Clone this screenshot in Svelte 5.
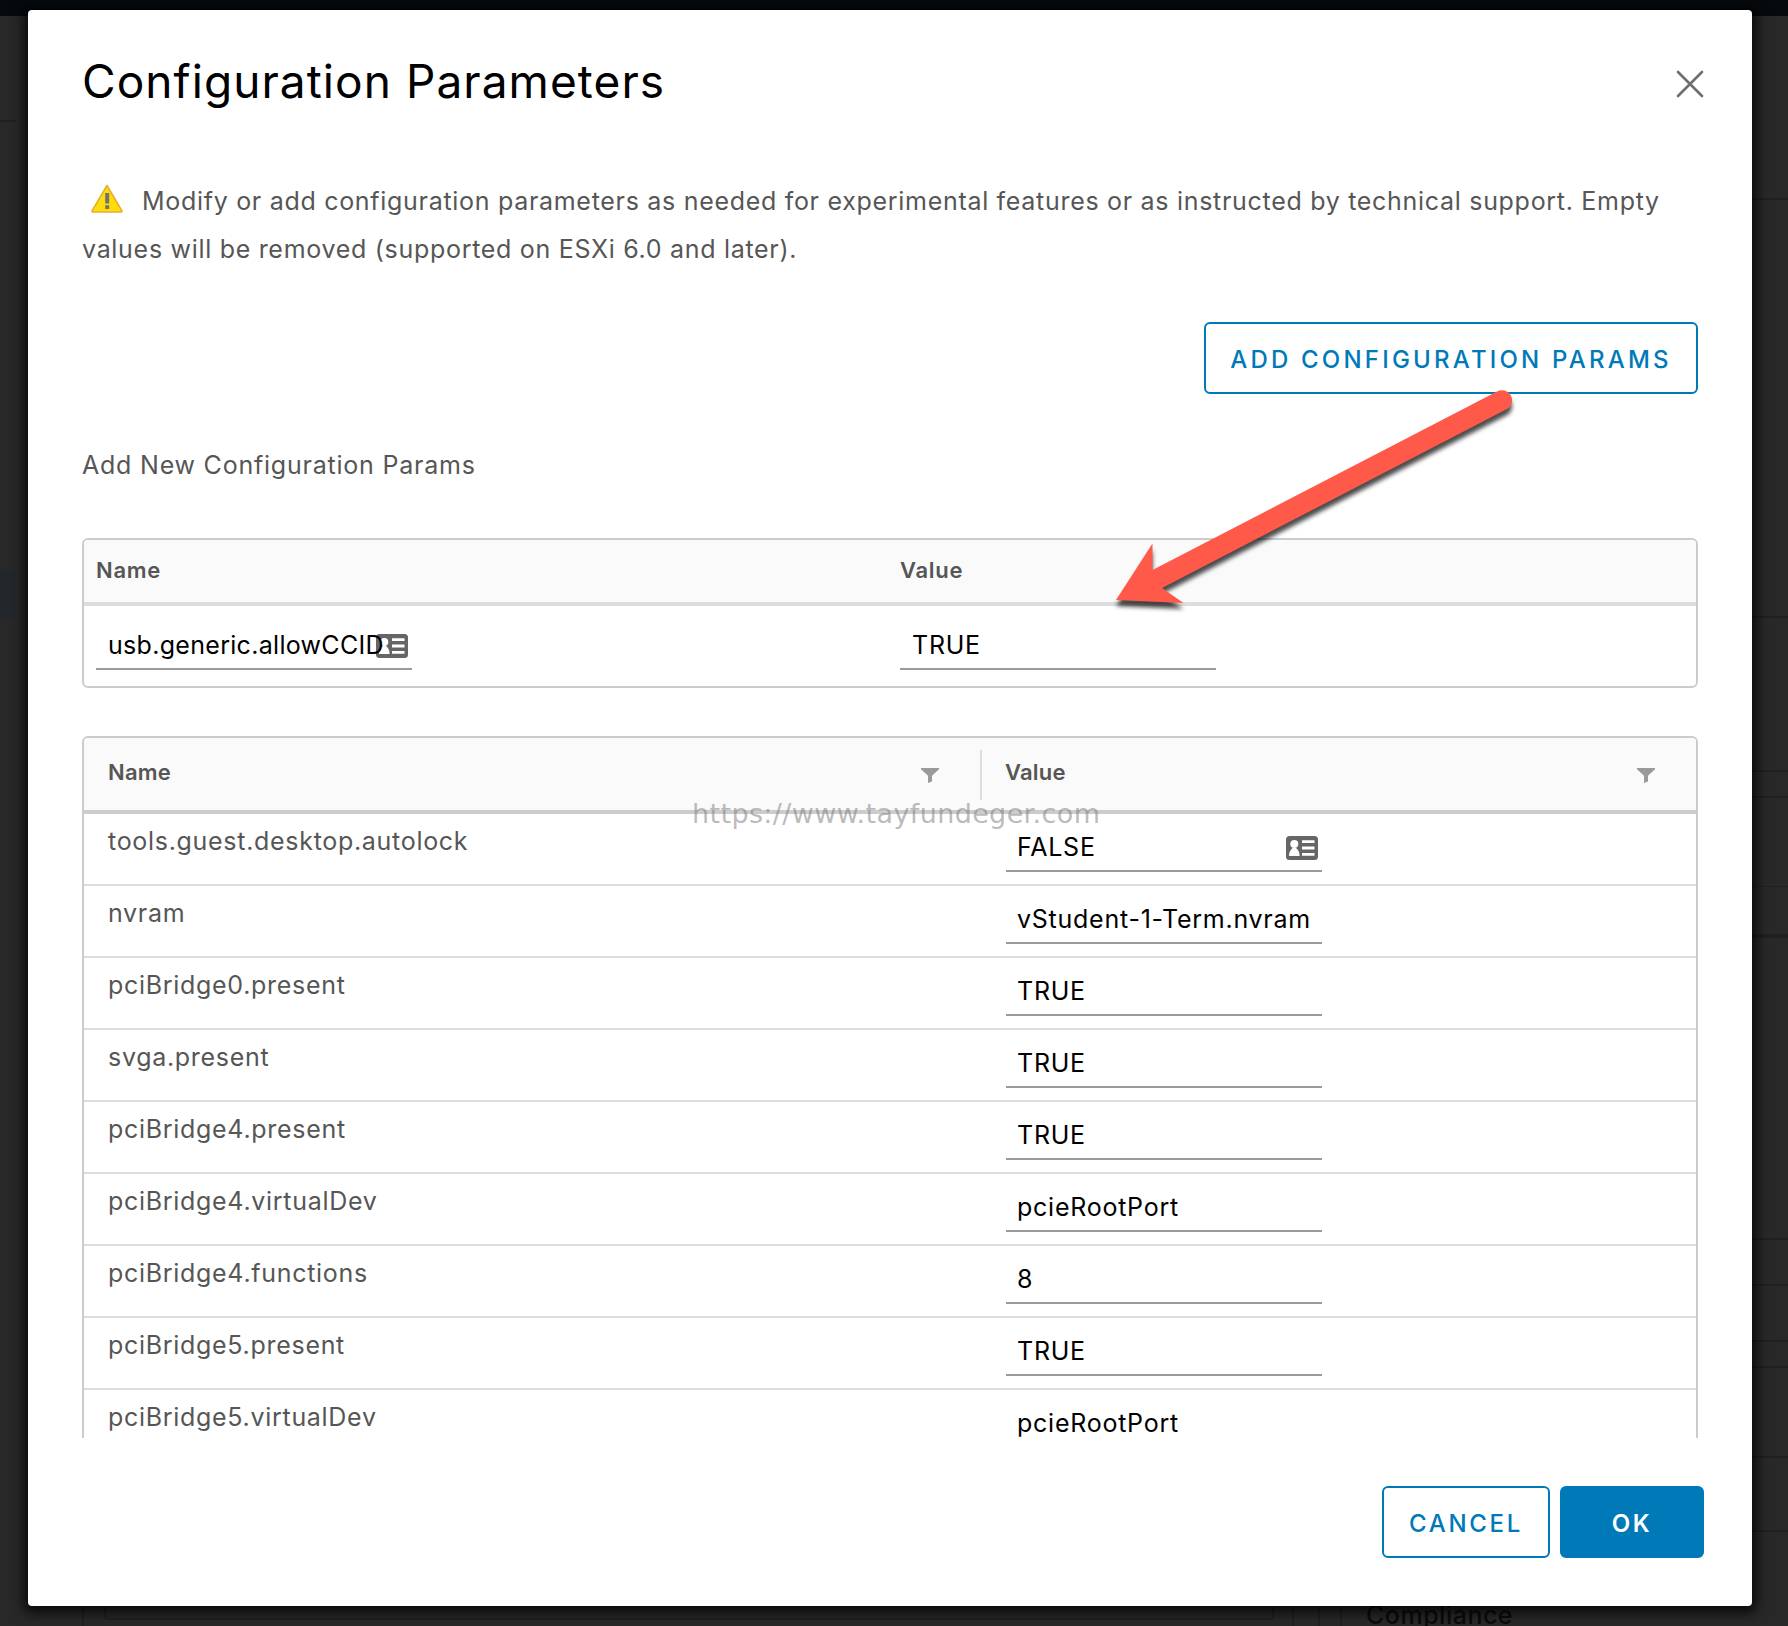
<script>
	let newParam = { name: 'usb.generic.allowCCID', value: 'TRUE' };

	let params = [
		{ name: 'tools.guest.desktop.autolock', value: 'FALSE', card: true },
		{ name: 'nvram', value: 'vStudent-1-Term.nvram' },
		{ name: 'pciBridge0.present', value: 'TRUE' },
		{ name: 'svga.present', value: 'TRUE' },
		{ name: 'pciBridge4.present', value: 'TRUE' },
		{ name: 'pciBridge4.virtualDev', value: 'pcieRootPort' },
		{ name: 'pciBridge4.functions', value: '8' },
		{ name: 'pciBridge5.present', value: 'TRUE' },
		{ name: 'pciBridge5.virtualDev', value: 'pcieRootPort' }
	];

	// faint edges of the page behind the modal
	const leftLines = [{ top: 120, height: 2 }];
	const rightLines = [
		{ top: 198, height: 2 },
		{ top: 616, height: 2 },
		{ top: 770, height: 2 },
		{ top: 796, height: 2 },
		{ top: 886, height: 1 },
		{ top: 934, height: 4 },
		{ top: 1238, height: 2 },
		{ top: 1284, height: 2 },
		{ top: 1340, height: 2 },
		{ top: 1366, height: 2 },
		{ top: 1456, height: 2 },
		{ top: 1530, height: 2 }
	];
</script>

{#snippet cardIcon()}
	<svg class="card-icon" viewBox="0 0 32 24" width="32" height="24">
		<rect width="32" height="24" rx="3.5" fill="#666" />
		<circle cx="8.3" cy="8" r="4" fill="#fff" />
		<path d="M3 20c0-4 1.500-6 3.500-8h3.600c2 2 3.500 4 3.500 8z" fill="#fff" />
		<path d="M16 4.200h12.500v2.800H16zM16 10.600h12.500v2.800H16zM16 17h12.500v2.800H16z" fill="#fff" />
	</svg>
{/snippet}

{#snippet filterIcon()}
	<svg class="filter-icon" viewBox="0 0 18 15" width="18" height="15">
		<path d="M0 0h18v1.200L11 7.800v5.700L7 15V7.800L0 1.200z" fill="#9a9a9a" />
	</svg>
{/snippet}

<div class="page">
	<div class="topbar"></div>
	{#each leftLines as line}
		<div class="line left" style="top: {line.top}px; height: {line.height}px"></div>
	{/each}
	<div class="selected"></div>
	{#each rightLines as line}
		<div class="line right" style="top: {line.top}px; height: {line.height}px"></div>
	{/each}
	<div class="portlet"></div>
	<div class="divider first"></div>
	<div class="divider second"></div>
	<div class="divider third"></div>
	<div class="divider fourth"></div>
	<span class="behind">Compliance</span>

	<div class="modal">
		<header class="modal-header">
			<h1>Configuration Parameters</h1>
			<button class="close" aria-label="Close">
				<svg viewBox="0 0 28 28" width="28" height="28">
					<path
						d="M2 2l24 24M26 2L2 26"
						stroke="#6e6e6e"
						stroke-width="2.600"
						stroke-linecap="round"
						fill="none"
					/>
				</svg>
			</button>
		</header>

		<div class="modal-body">
			<p class="message">
				<svg class="warning" viewBox="0 0 32 29" width="32" height="29">
					<path
						d="M16 1.500L31 27q.3 1-.8 1H1.800Q.7 28 1 27z"
						fill="#ffdc0b"
						stroke="#e6b02e"
						stroke-width="1.500"
						stroke-linejoin="round"
					/>
					<path d="M14.200 9h4v10.500h-4zM14.200 21.200h4v3.800h-4z" fill="#737373" />
				</svg>Modify or add configuration parameters as needed for experimental features or as instructed by
				technical support. Empty<br />values will be removed (supported on ESXi 6.0 and later).
			</p>

			<div class="actions">
				<button class="btn btn-add">Add Configuration Params</button>
			</div>

			<h2>Add New Configuration Params</h2>

			<div class="table new-params">
				<div class="head">
					<span>Name</span>
					<span>Value</span>
				</div>
				<div class="row">
					<div class="cell">
						<div class="input">
							<input type="text" class="new-name" bind:value={newParam.name} />{@render cardIcon()}
						</div>
					</div>
					<div class="cell">
						<div class="input"><input type="text" bind:value={newParam.value} /></div>
					</div>
				</div>
			</div>

			<div class="table grid">
				<div class="head">
					<div class="column">Name {@render filterIcon()}</div>
					<div class="column">Value {@render filterIcon()}</div>
				</div>
				{#each params as param}
					<div class="row">
						<div class="name">{param.name}</div>
						<div class="input">
							<input type="text" bind:value={param.value} />
							{#if param.card}{@render cardIcon()}{/if}
						</div>
					</div>
				{/each}
			</div>
		</div>

		<footer class="modal-footer">
			<button class="btn btn-cancel">Cancel</button>
			<button class="btn btn-primary">OK</button>
		</footer>
	</div>

	<svg class="arrow" viewBox="0 0 420 240" width="420" height="240">
		<path
			d="M16 210L52.500 153.500V180L397 1.500A10 10 0 0 1 407 19L62 198L83.500 213z"
			fill="#ff594a"
		/>
	</svg>
	<span class="watermark">https://www.tayfundeger.com</span>
</div>

<style>
	:global(body) {
		margin: 0;
		background: #282828;
	}

	.page {
		position: relative;
		box-sizing: border-box;
		width: 1788px;
		height: 1626px;
		padding: 10px 36px 20px 28px;
		overflow: hidden;
		background: #282828;
		color: #565656;
		font-family: Inter, 'Liberation Sans', sans-serif;
		font-size: 25px;
		letter-spacing: 0.7px;
	}

	.topbar {
		position: absolute;
		inset: 0 0 auto;
		height: 16px;
		background: #050a0e;
	}

	.line {
		position: absolute;
		background: #202020;
	}

	.line.left {
		left: 0;
		width: 16px;
	}

	.line.right {
		left: 1752px;
		right: 0;
	}

	.selected {
		position: absolute;
		top: 570px;
		left: 0;
		width: 16px;
		height: 48px;
		background: #23262a;
	}

	.portlet {
		position: absolute;
		top: 1560px;
		left: 104px;
		width: 1166px;
		height: 56px;
		border: 2px solid #202020;
		border-radius: 4px;
	}

	.divider {
		position: absolute;
		top: 1600px;
		bottom: 0;
		width: 2px;
		background: #202020;
	}

	.first {
		left: 82px;
	}

	.second {
		left: 1292px;
	}

	.third {
		left: 1318px;
	}

	.fourth {
		left: 1340px;
	}

	.behind {
		position: absolute;
		top: 1600px;
		left: 1366px;
		color: #0b0b0b;
		font-size: 25px;
		font-weight: 500;
		line-height: 30px;
		letter-spacing: 0.5px;
	}

	.modal {
		position: relative;
		display: flex;
		flex-direction: column;
		box-sizing: border-box;
		height: 1596px;
		padding: 48px 48px 48px 54px;
		border-radius: 4px;
		background: #fff;
		box-shadow: 0 2px 12px 5px rgba(0, 0, 0, 0.75);
	}

	.modal-header {
		display: flex;
		justify-content: space-between;
		height: 116px;
	}

	h1 {
		margin: -7px 0 0;
		color: #000;
		font-size: 46px;
		font-weight: 400;
		line-height: 60px;
		letter-spacing: 1.07px;
	}

	button {
		padding: 0;
		border: 0;
		background: none;
		font-family: inherit;
	}

	.close {
		align-self: flex-start;
		height: 28px;
		margin: 12px 0 0;
	}

	.close svg {
		display: block;
	}

	.modal-body {
		height: 1264px;
		margin-right: 6px;
		overflow: hidden;
	}

	.message {
		margin: 3px 0 0;
		line-height: 48px;
		white-space: nowrap;
	}

	.warning {
		margin: 0 19px -3px 9px;
	}

	.actions {
		display: flex;
		justify-content: flex-end;
		margin-top: 49px;
	}

	.btn {
		box-sizing: border-box;
		height: 72px;
		padding-top: 3px;
		border: 2px solid #0079b8;
		border-radius: 6px;
		color: #0079b8;
		font-size: 24px;
		font-weight: 500;
		letter-spacing: 2.7px;
		text-transform: uppercase;
	}

	.btn-add {
		width: 494px;
		letter-spacing: 3.2px;
	}

	h2 {
		margin: 47px 0 49px;
		font-size: 25px;
		font-weight: 400;
		line-height: 48px;
		letter-spacing: 0.78px;
	}

	.table {
		box-sizing: border-box;
		border: 2px solid #ccc;
		border-radius: 6px;
	}

	.head {
		box-sizing: border-box;
		background: #fafafa;
		font-size: 22px;
		font-weight: 600;
		border-radius: 4px 4px 0 0;
	}

	.input {
		position: relative;
		box-sizing: border-box;
		width: 316px;
		height: 48px;
		border-bottom: 2px solid #9a9a9a;
	}

	input {
		box-sizing: border-box;
		width: 100%;
		height: 46px;
		padding: 0 0 0 12px;
		border: 0;
		outline: 0;
		background: none;
		color: #000;
		font: inherit;
		letter-spacing: 0.75px;
	}

	.card-icon {
		position: absolute;
		right: 4px;
		bottom: 10px;
	}

	.new-params {
		height: 150px;
	}

	.new-params .head,
	.new-params .row {
		display: grid;
		grid-template-columns: 804px 1fr;
		padding-left: 12px;
	}

	.new-params .head {
		height: 66px;
		border-bottom: 4px solid #ddd;
		line-height: 60px;
	}

	.new-params .row {
		padding-top: 16px;
	}

	.new-name {
		position: relative;
		z-index: 1;
		letter-spacing: 0.3px;
	}

	.grid {
		margin-top: 48px;
	}

	.grid .head {
		display: grid;
		grid-template-columns: 896px 1fr;
		height: 76px;
		padding: 12px 0;
		border-bottom: 4px solid #ccc;
		letter-spacing: 0.2px;
	}

	.grid input {
		padding-left: 11px;
	}

	.column {
		display: flex;
		justify-content: space-between;
		box-sizing: border-box;
		height: 50px;
		padding: 0 41px 0 24px;
		line-height: 45px;
	}

	.column + .column {
		padding-left: 23px;
		border-left: 2px solid #ddd;
	}

	.filter-icon {
		margin-top: 18px;
	}

	.grid .row {
		display: grid;
		grid-template-columns: 898px 1fr;
		box-sizing: border-box;
		height: 72px;
		padding: 10px 0 0 24px;
		border-bottom: 2px solid #ddd;
	}

	.name {
		margin-top: -7px;
		line-height: 48px;
	}

	.modal-footer {
		display: flex;
		justify-content: flex-end;
		gap: 10px;
		margin-top: 48px;
	}

	.btn-cancel {
		width: 168px;
	}

	.btn-primary {
		width: 144px;
		background: #0079b8;
		color: #fff;
		font-weight: 600;
	}

	.arrow {
		position: absolute;
		top: 390px;
		left: 1100px;
		filter: drop-shadow(0 6px 2px rgba(0, 0, 0, 0.7));
	}

	.watermark {
		position: absolute;
		top: 798px;
		left: 692px;
		color: rgba(120, 120, 120, 0.5);
		font-family: 'DejaVu Sans', sans-serif;
		font-size: 27px;
		line-height: 32px;
		letter-spacing: 0.37px;
	}
</style>
